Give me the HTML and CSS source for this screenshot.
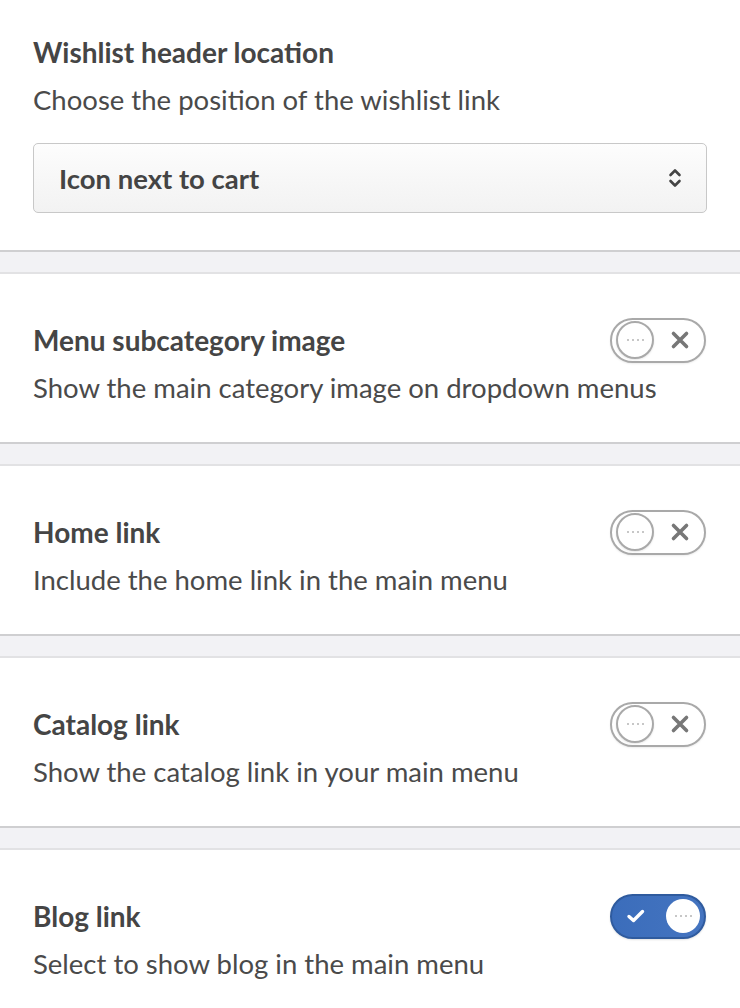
FILE: index.html
```html
<!DOCTYPE html>
<html>
<head>
<meta charset="utf-8">
<link rel="stylesheet" href="styles.css">
</head>
<body>
<div class="page">
  <section class="card card-first">
    <h2 class="title">Wishlist header location</h2>
    <p class="desc">Choose the position of the wishlist link</p>
    <div class="select">
      <span class="select-value">Icon next to cart</span>
      <svg class="chev" width="14" height="22" viewBox="0 0 14 22"><path d="M2.5 8 L7 3.5 L11.5 8 M2.5 14 L7 18.5 L11.5 14" fill="none" stroke="#444" stroke-width="2.6" stroke-linecap="round" stroke-linejoin="round"/></svg>
    </div>
  </section>
  <div class="sep"></div>
  <section class="card row">
    <h2 class="title">Menu subcategory image</h2>
    <div class="toggle off"><span class="knob"><i></i><i></i><i></i><i></i></span><svg class="x" width="20" height="20" viewBox="0 0 20 20"><path d="M3.5 3.5 L16.5 16.5 M16.5 3.5 L3.5 16.5" stroke="#777" stroke-width="3.6" stroke-linecap="round"/></svg></div>
    <p class="desc">Show the main category image on dropdown menus</p>
  </section>
  <div class="sep"></div>
  <section class="card row">
    <h2 class="title">Home link</h2>
    <div class="toggle off"><span class="knob"><i></i><i></i><i></i><i></i></span><svg class="x" width="20" height="20" viewBox="0 0 20 20"><path d="M3.5 3.5 L16.5 16.5 M16.5 3.5 L3.5 16.5" stroke="#777" stroke-width="3.6" stroke-linecap="round"/></svg></div>
    <p class="desc">Include the home link in the main menu</p>
  </section>
  <div class="sep"></div>
  <section class="card row">
    <h2 class="title">Catalog link</h2>
    <div class="toggle off"><span class="knob"><i></i><i></i><i></i><i></i></span><svg class="x" width="20" height="20" viewBox="0 0 20 20"><path d="M3.5 3.5 L16.5 16.5 M16.5 3.5 L3.5 16.5" stroke="#777" stroke-width="3.6" stroke-linecap="round"/></svg></div>
    <p class="desc">Show the catalog link in your main menu</p>
  </section>
  <div class="sep"></div>
  <section class="card row">
    <h2 class="title">Blog link</h2>
    <div class="toggle on"><svg class="check" width="20" height="16" viewBox="0 0 20 16"><path d="M3 8.5 L7.5 12.5 L16.5 3.5" fill="none" stroke="#fff" stroke-width="3.4" stroke-linecap="round" stroke-linejoin="round"/></svg><span class="knob"><i></i><i></i><i></i><i></i></span></div>
    <p class="desc">Select to show blog in the main menu</p>
  </section>
</div>
</body>
</html>
```
FILE: styles.css
```css
* { box-sizing: border-box; }
html, body { margin: 0; padding: 0; background: #fff; }
body {
  font-family: Lato, "Open Sans", sans-serif;
  color: #4a4a4a;
  width: 740px;
  height: 1008px;
  overflow: hidden;
}
.page { display: flex; flex-direction: column; }
.card {
  background: #fff;
  padding: 48px 34px 36px 33px;
  height: 168px;
}
.card-first {
  height: 250px;
  padding-top: 34px;
}
.title {
  margin: 0;
  font-size: 28px;
  line-height: 36px;
  font-weight: 700;
  color: #454545;
  white-space: nowrap;
}
.desc {
  margin: 12px 0 0;
  font-size: 27.5px;
  line-height: 36px;
  font-weight: 400;
  color: #4a4a4a;
  white-space: nowrap;
}
.select {
  margin-top: 25px;
  width: 674px;
  height: 70px;
  border: 1px solid #c8c8c8;
  border-radius: 5px;
  background: linear-gradient(#fdfdfd, #f2f2f2);
  display: flex;
  align-items: center;
  justify-content: space-between;
  padding: 0 24px 0 25px;
}
.select-value {
  font-size: 27.5px;
  font-weight: 700;
  color: #444;
}
.sep {
  height: 24px;
  background: #f2f2f5;
  border-top: 2px solid #cfcfd1;
  border-bottom: 2px solid #e2e2e4;
}
.row {
  display: grid;
  grid-template-columns: 1fr auto;
  grid-template-rows: 36px auto;
  align-items: center;
}
.row .desc { grid-column: 1 / -1; }
.toggle {
  width: 96px;
  height: 45px;
  border-radius: 23px;
  display: flex;
  align-items: center;
  justify-content: space-between;
  align-self: center;
}
.toggle.off {
  border: 2px solid #a9a9a9;
  background: #fff;
  padding: 0 14px 0 4px;
  box-shadow: 0 1px 2px rgba(0,0,0,0.08);
}
.toggle.on {
  border: 2px solid #2f5b9e;
  background: linear-gradient(90deg, #3b6dbb, #4474c0);
  padding: 0 4px 0 14px;
  box-shadow: 0 1px 2px rgba(0,0,0,0.12);
}
.knob {
  width: 36px;
  height: 36px;
  border-radius: 50%;
  background: #fff;
  display: flex;
  align-items: center;
  justify-content: center;
  gap: 3px;
}
.toggle.off .knob {
  border: 2px solid #a9a9a9;
  width: 38px;
  height: 38px;
  box-shadow: 0 1px 2px rgba(0,0,0,0.1);
}
.toggle.on .knob {
  width: 34px;
  height: 34px;
}
.knob i {
  display: block;
  width: 2px;
  height: 2px;
  border-radius: 1px;
  background: #b5b5b5;
}
.x { display: block; }
.check { display: block; }
```
